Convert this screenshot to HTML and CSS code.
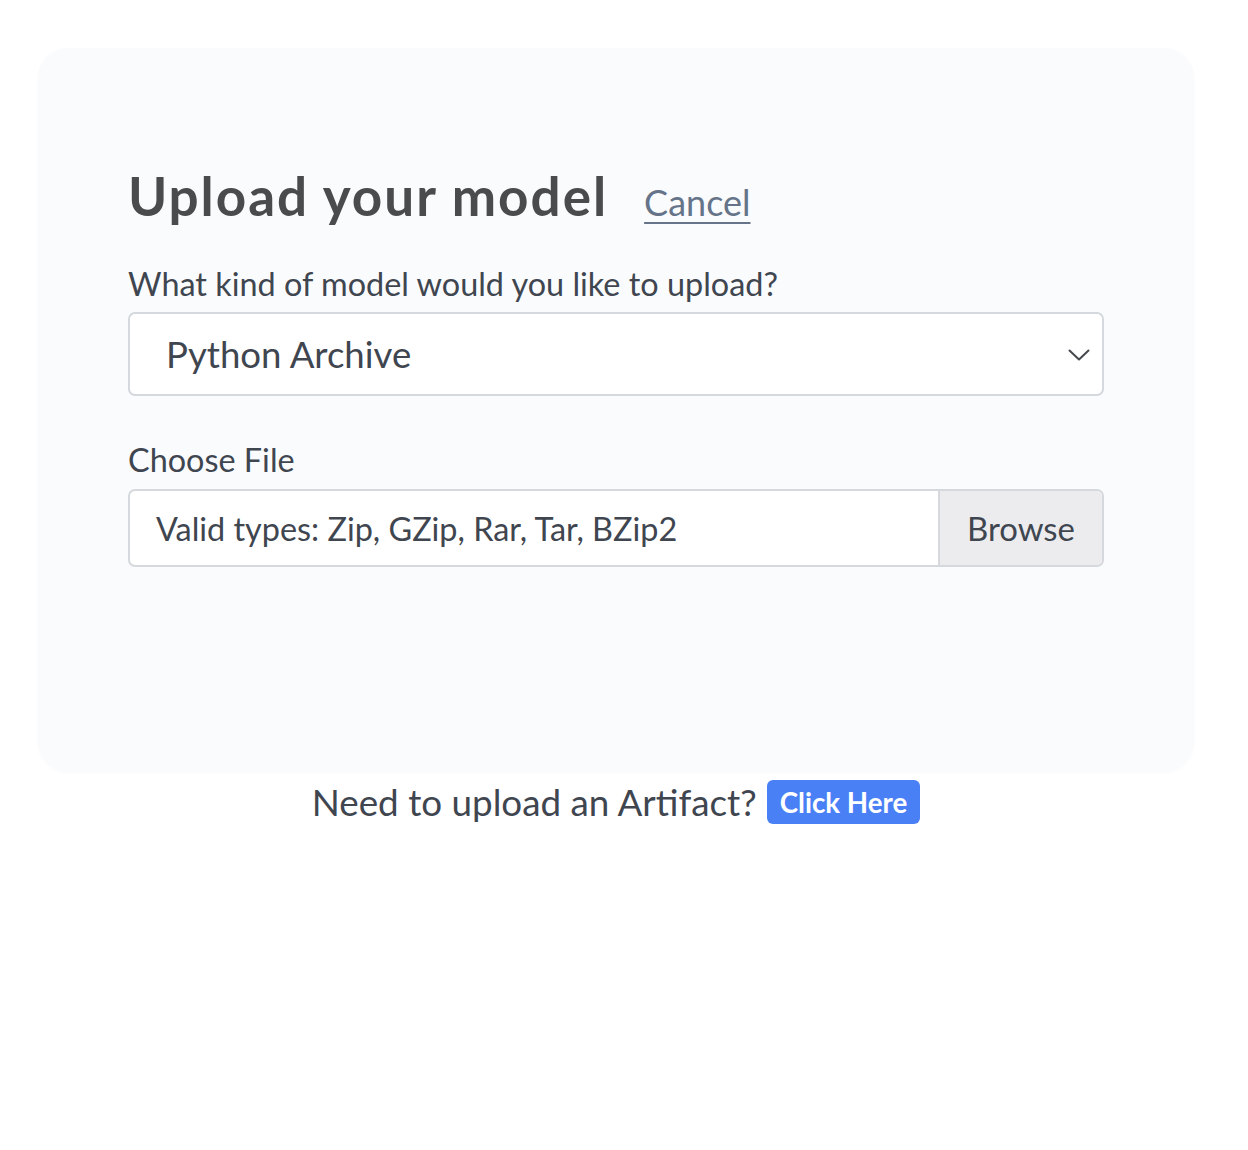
FILE: index.html
```html
<!DOCTYPE html>
<html>
<head>
<meta charset="utf-8">
<link rel="stylesheet" href="styles.css">
</head>
<body>
<div class="wrap">
  <div class="card">
    <div class="title-row">
      <h1 class="title">Upload your model</h1>
      <a class="cancel" href="#">Cancel</a>
    </div>
    <label class="label">What kind of model would you like to upload?</label>
    <div class="select">
      <span class="select-text">Python Archive</span>
      <svg class="chev" width="22" height="12" viewBox="0 0 22 12"><path d="M1.5 1.5 L11 10.5 L20.5 1.5" fill="none" stroke="#45494e" stroke-width="2" stroke-linecap="round" stroke-linejoin="round"/></svg>
    </div>
    <label class="label label-file">Choose File</label>
    <div class="file">
      <span class="file-text">Valid types: Zip, GZip, Rar, Tar, BZip2</span>
      <span class="browse">Browse</span>
    </div>
  </div>
  <div class="footer">
    <span class="footer-text">Need to upload an Artifact?</span>
    <a class="btn" href="#">Click Here</a>
  </div>
</div>
</body>
</html>
```
FILE: styles.css
```css
html, body { margin: 0; padding: 0; background: #fff; }
body { font-family: Lato, "Noto Sans", sans-serif; color: #495057; }
.wrap { width: 1156px; margin: 48px 0 0 38px; }
.card {
  background: #fafbfd;
  border-radius: 30px;
  padding: 118px 90px 205px 90px;
  box-shadow: 0 1px 4px rgba(0,0,0,0.02);
  display: flex;
  flex-direction: column;
}
.title-row { display: flex; align-items: baseline; gap: 36px; }
.title { margin: 0; font-size: 53px; letter-spacing: 2px; font-weight: 700; color: #4a4b4d; line-height: 60px; }
.cancel { font-size: 36px; color: #657489; text-decoration: underline; text-underline-offset: 6px; text-decoration-thickness: 2px; }
.label { font-size: 32.4px; color: #3f4650; margin-top: 38px; line-height: 40px; }
.select {
  box-sizing: border-box;
  margin-top: 8px;
  height: 84px;
  border: 2px solid #d5d8dc;
  border-radius: 7px;
  background: #fff;
  display: flex;
  align-items: center;
  justify-content: space-between;
  padding: 0 12px 0 36px;
}
.select-text { font-size: 36.6px; color: #3f4650; }
.chev { margin-top: 1px; }
.label-file { margin-top: 44px; }
.file {
  box-sizing: border-box;
  margin-top: 9px;
  height: 78px;
  border: 2px solid #d5d8dc;
  border-radius: 7px;
  background: #fff;
  display: flex;
  overflow: hidden;
}
.file-text { flex: 1; display: flex; align-items: center; padding-left: 26px; font-size: 32.4px; color: #3f4650; }
.browse { width: 162px; border-left: 2px solid #d5d8dc; background: #ececee; display: flex; align-items: center; justify-content: center; font-size: 32.9px; color: #3f4650; }
.footer { display: flex; justify-content: center; align-items: center; gap: 10px; margin-top: 8px; }
.footer-text { font-size: 36.8px; color: #3f4650; }
.btn {
  background: #4a80f6;
  color: #fff;
  font-weight: 700;
  font-size: 27.7px;
  text-decoration: none;
  border-radius: 6px;
  padding: 0 13px;
  height: 44px;
  display: flex;
  align-items: center;
}
```
